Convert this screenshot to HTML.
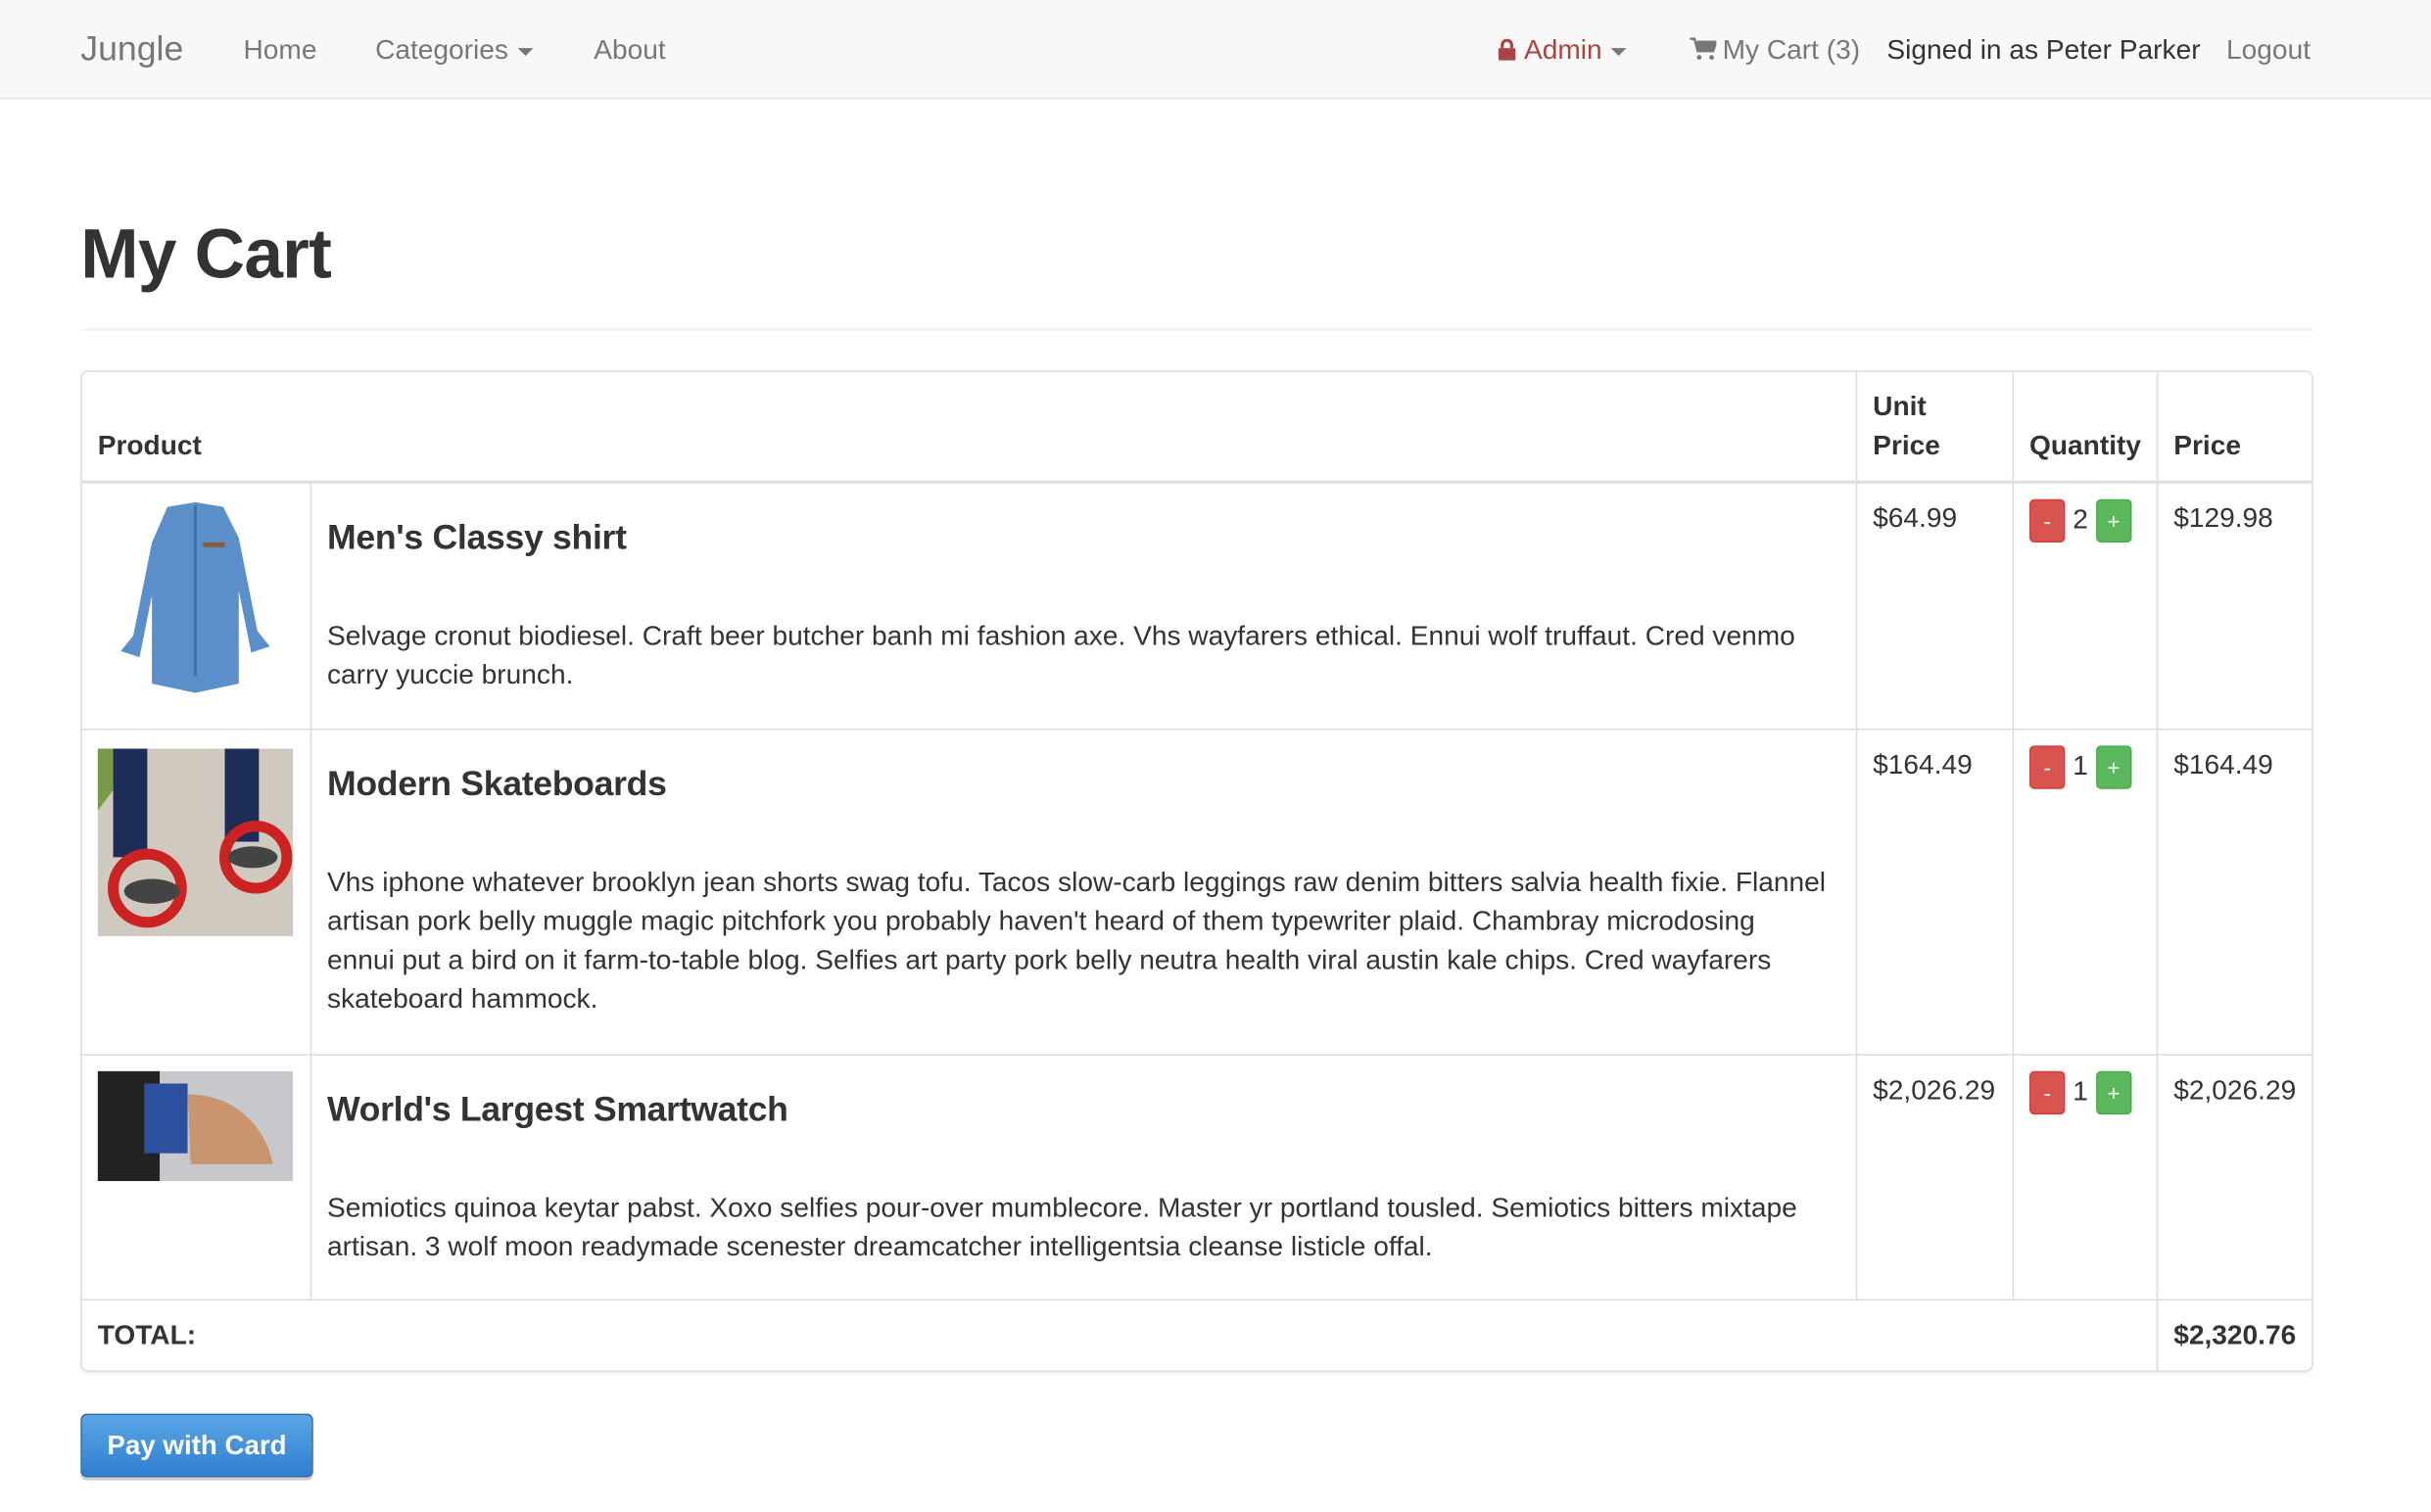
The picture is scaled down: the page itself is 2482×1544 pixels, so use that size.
<!DOCTYPE html>
<html><head><meta charset="utf-8">
<style>
html,body{margin:0;padding:0;background:#fff;overflow:hidden;width:2482px;height:1544px}
#w{width:1568px;height:976px;transform:scale(1.58291);transform-origin:0 0;position:relative;font-family:"Liberation Sans",Arial,sans-serif;color:#333;font-size:17.75px}
.nav{position:absolute;left:0;top:0;width:1568px;height:63px;background:#f8f8f8;border-bottom:1px solid #e7e7e7}
.nav span{position:absolute;top:20px;line-height:24px;color:#777;white-space:nowrap}
.caret{display:inline-block;width:0;height:0;border-left:5px solid transparent;border-right:5px solid transparent;border-top:5px solid #777;vertical-align:middle;margin-left:6px}
h1{position:absolute;left:52px;top:136px;margin:0;font-size:45px;font-weight:bold;line-height:56px;color:#333;letter-spacing:-0.5px}
.hr{position:absolute;left:52px;top:212px;width:1440px;height:1px;background:#eee}
table{position:absolute;left:52px;top:239px;width:1440px;border-collapse:separate;border-spacing:0;border:1px solid #ddd;border-radius:5px;box-shadow:0 1px 2px rgba(0,0,0,.08)}
td,th{padding:10px;border-left:1px solid #ddd;border-top:1px solid #ddd;vertical-align:top;text-align:left;line-height:25px}
tr>*:first-child{border-left:none}
thead th{border-top:none;vertical-align:bottom;font-weight:bold;height:50px}
thead th{border-bottom:1px solid #ddd}
tbody tr:first-child td{border-top:1px solid #ddd}
.nm{font-size:22.5px;line-height:28px;margin:11px 0 0 0;font-weight:bold;letter-spacing:-0.2px}
.ds{margin:37px 0 0 0}
.b{display:inline-block;width:21px;height:26px;border-radius:3px;color:#fff;text-align:center;line-height:26px;font-size:14px;vertical-align:middle}
.r{background:#d9534f;border:1px solid #d43f3a}.g{background:#5cb85c;border:1px solid #4cae4c}
.pay{position:absolute;left:52px;top:912px;width:148px;height:39px;border:1px solid #2e6da4;border-radius:4px;background:linear-gradient(#5ba6e6,#2f7fd0);color:#fff;font-weight:bold;font-size:17.5px;text-align:center;line-height:39px;box-shadow:0 2px 0 #ccc}
</style></head><body><div id="w">
<div class="nav">
<span style="left:52px;top:18px;font-size:22.5px;line-height:28px">Jungle</span>
<span style="left:157px">Home</span>
<span style="left:242px">Categories<i class="caret"></i></span>
<span style="left:383px">About</span>
<span style="left:966px;color:#a94442"><svg width="12" height="14" viewBox="0 0 12 14" style="vertical-align:-1px;margin-right:5px"><path d="M3 6V4a3 3 0 0 1 6 0v2" stroke="#a94442" stroke-width="2" fill="none"/><rect x="0.5" y="6" width="11" height="8" rx="1" fill="#a94442"/></svg>Admin<i class="caret"></i></span>
<span style="left:1090px"><svg width="17" height="15" viewBox="0 0 17 15" style="vertical-align:-1px;margin-right:4px"><path d="M0 1h3l2 8h10l2-6H4.5" fill="#777" stroke="#777" stroke-width="1.5"/><circle cx="6" cy="13" r="1.5" fill="#777"/><circle cx="14" cy="13" r="1.5" fill="#777"/></svg>My Cart (3)</span>
<span style="left:1217px;color:#333">Signed in as Peter Parker</span>
<span style="left:1436px">Logout</span>
</div>
<h1>My Cart</h1>
<div class="hr"></div>
<table>
<colgroup><col style="width:147px"><col style="width:997px"><col style="width:101px"><col style="width:93px"><col></colgroup>
<thead><tr><th colspan="2">Product</th><th>Unit<br>Price</th><th>Quantity</th><th>Price</th></tr></thead>
<tbody>
<tr style="height:159px"><td><svg width="127" height="128" viewBox="0 0 127 128"><path d="M45 5l18-3 18 3 10 20 12 60 8 10-12 4-8-40v60l-28 6-28-6V62l-8 40-12-4 8-10 12-60z" fill="#5b8fc9"/><path d="M63 4v110" stroke="#3d6a9e" stroke-width="1.5"/><rect x="68" y="28" width="14" height="3" fill="#8a5a3a"/></svg></td>
<td><div class="nm">Men's Classy shirt</div><div class="ds">Selvage cronut biodiesel. Craft beer butcher banh mi fashion axe. Vhs wayfarers ethical. Ennui wolf truffaut. Cred venmo carry yuccie brunch.</div></td>
<td>$64.99</td><td><span class="b r">-</span> 2 <span class="b g">+</span></td><td>$129.98</td></tr>
<tr style="height:210px"><td><svg width="126" height="121" viewBox="0 0 126 121" style="margin-top:2px"><rect width="126" height="121" fill="#cfc9c0"/><path d="M0 0h30L0 40z" fill="#7a9a4a"/><rect x="10" y="0" width="22" height="70" fill="#1e2d55"/><rect x="82" y="0" width="22" height="60" fill="#1e2d55"/><circle cx="32" cy="90" r="22" fill="none" stroke="#c22" stroke-width="7"/><circle cx="102" cy="70" r="20" fill="none" stroke="#c22" stroke-width="7"/><ellipse cx="35" cy="92" rx="18" ry="8" fill="#444"/><ellipse cx="100" cy="70" rx="16" ry="7" fill="#444"/></svg></td>
<td><div class="nm">Modern Skateboards</div><div class="ds">Vhs iphone whatever brooklyn jean shorts swag tofu. Tacos slow-carb leggings raw denim bitters salvia health fixie. Flannel artisan pork belly muggle magic pitchfork you probably haven't heard of them typewriter plaid. Chambray microdosing<br>ennui put a bird on it farm-to-table blog. Selfies art party pork belly neutra health viral austin kale chips. Cred wayfarers<br>skateboard hammock.</div></td>
<td>$164.49</td><td><span class="b r">-</span> 1 <span class="b g">+</span></td><td>$164.49</td></tr>
<tr style="height:158px"><td><svg width="126" height="71" viewBox="0 0 126 71"><rect width="126" height="71" fill="#c8c8cc"/><path d="M0 0h40v71H0z" fill="#222"/><rect x="30" y="8" width="28" height="45" fill="#2d4fa0"/><path d="M58 15c30 0 50 20 55 45H60z" fill="#c9956e"/></svg></td>
<td><div class="nm">World's Largest Smartwatch</div><div class="ds">Semiotics quinoa keytar pabst. Xoxo selfies pour-over mumblecore. Master yr portland tousled. Semiotics bitters mixtape artisan. 3 wolf moon readymade scenester dreamcatcher intelligentsia cleanse listicle offal.</div></td>
<td>$2,026.29</td><td><span class="b r">-</span> 1 <span class="b g">+</span></td><td>$2,026.29</td></tr>
<tr style="height:46px"><th colspan="4" style="vertical-align:middle">TOTAL:</th><th style="vertical-align:middle">$2,320.76</th></tr>
</tbody></table>
<div class="pay">Pay with Card</div>
</div></body></html>
